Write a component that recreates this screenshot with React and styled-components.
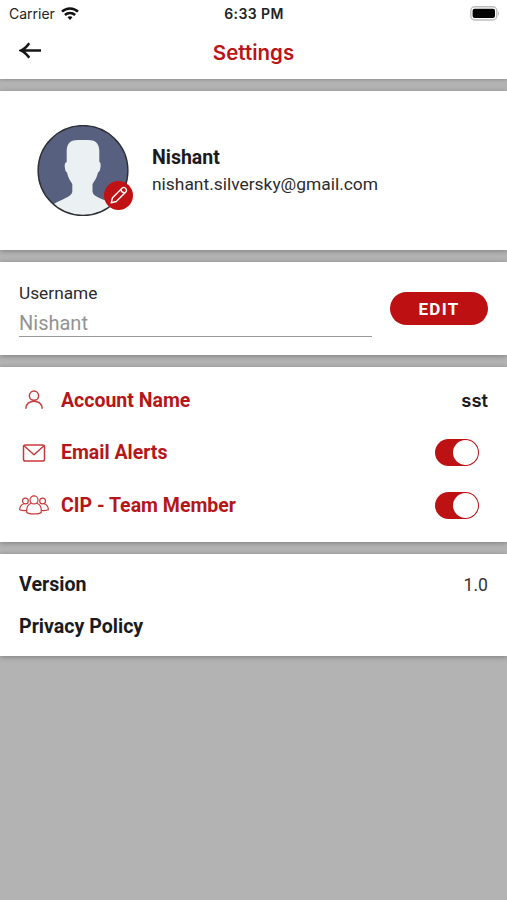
import React from 'react';
import styled, { createGlobalStyle } from 'styled-components';

const GlobalStyle = createGlobalStyle`
  * {
    box-sizing: border-box;
  }
  body {
    margin: 0;
    background: #b3b3b3;
    font-family: Roboto, sans-serif;
    color: #1b1b1d;
  }
`;

const Screen = styled.div`
  min-height: 900px;
  display: flex;
  flex-direction: column;
  gap: 12px;
  overflow: hidden;
`;

const Header = styled.header`
  height: 79px;
  background: #fff;
  box-shadow: 0 1px 3px rgba(0, 0, 0, 0.2);
`;

const StatusBar = styled.div`
  height: 27px;
  padding: 0 8px 0 9px;
  display: grid;
  grid-template-columns: 1fr auto 1fr;
  align-items: center;
  font-family: Inter, sans-serif;
  font-size: 14px;
  color: #222;
`;

const Carrier = styled.div`
  display: flex;
  align-items: center;
  gap: 6px;
`;

const Time = styled.div`
  font-size: 14px;
  font-weight: 600;
  letter-spacing: 0.4px;
`;

const Battery = styled.svg`
  justify-self: end;
`;

const NavBar = styled.div`
  height: 50px;
  padding: 0 19px;
  display: grid;
  grid-template-columns: 1fr auto 1fr;
  align-items: center;
`;

const BackButton = styled.button`
  width: 24px;
  height: 24px;
  padding: 0;
  border: 0;
  background: none;
  display: flex;
  align-items: center;
  margin-bottom: 3px;
`;

const Title = styled.h1`
  margin: 0;
  font-family: Inter, sans-serif;
  font-size: 20.5px;
  font-weight: 600;
  color: #bb1416;
`;

const Panel = styled.section`
  height: ${({ $height }) => $height}px;
  padding: ${({ $padding }) => $padding || '0 19px'};
  background: #fff;
  box-shadow: 0 1px 5px rgba(0, 0, 0, 0.3);
`;

const ProfilePanel = styled(Panel)`
  display: flex;
  align-items: center;
`;

const Avatar = styled.div`
  position: relative;
  width: 92px;
  height: 92px;
  margin-right: 23px;
`;

const EditBadge = styled.div`
  position: absolute;
  right: -4px;
  bottom: 7px;
  width: 29px;
  height: 29px;
  border-radius: 50%;
  background: #c01114;
  display: flex;
  align-items: center;
  justify-content: center;
`;

const Name = styled.div`
  font-size: 19.5px;
  line-height: 24px;
  font-weight: 700;
`;

const Email = styled.div`
  margin-top: 2px;
  font-size: 17.4px;
  line-height: 24px;
  color: #2c2c2e;
`;

const UsernamePanel = styled(Panel)`
  display: flex;
  align-items: center;
  justify-content: space-between;
`;

const Field = styled.label`
  width: 353px;
  padding-top: 1px;
  font-size: 17.3px;
  line-height: 22px;
  color: #2c2c2e;
`;

const FieldValue = styled.div`
  height: 33px;
  border-bottom: 1px solid #999;
  font-size: 20px;
  line-height: 38px;
  color: #939393;
`;

const EditButton = styled.button`
  width: 98px;
  height: 33px;
  padding: 0;
  border: 0;
  border-radius: 17px;
  background: #bc1012;
  color: #fff;
  font-family: Roboto, sans-serif;
  font-size: 17px;
  font-weight: 700;
  letter-spacing: 1.3px;
`;

const SettingRow = styled.div`
  height: 52.5px;
  display: flex;
  align-items: center;
`;

const SettingIcon = styled.svg`
  width: 30px;
  height: 26px;
  margin-right: 12px;
  fill: none;
  stroke: #c93a3c;
  stroke-width: ${({ $weight }) => $weight || 1.5};
  stroke-linecap: round;
  stroke-linejoin: round;
`;

const SettingLabel = styled.div`
  flex: 1;
  font-size: 19.5px;
  font-weight: 700;
  color: #b51618;
`;

const SettingValue = styled.div`
  font-family: Inter, sans-serif;
  font-size: 18.4px;
  font-weight: 600;
`;

const Toggle = styled.div`
  width: 44px;
  height: 27px;
  margin-right: 9px;
  padding: 1px;
  border-radius: 14px;
  background: #bd1114;
  display: flex;
  justify-content: flex-end;
`;

const Knob = styled.div`
  width: 25px;
  height: 25px;
  border-radius: 50%;
  background: #fff;
`;

const InfoRow = styled.div`
  height: 41.5px;
  display: flex;
  align-items: center;
  justify-content: space-between;
  font-size: 19.6px;
  font-weight: 700;
`;

const Version = styled.span`
  font-size: 17.6px;
  font-weight: 400;
  color: #333;
`;

function WifiIcon() {
  return (
    <svg width="18" height="14" viewBox="0 0 18 14" fill="none" stroke="#111" strokeWidth="2.5">
      <path d="M1 4.7C5.500.3 12.500.3 17 4.700" />
      <path d="M3.900 8c2.900-2.800 7.300-2.800 10.200 0" />
      <path d="M9 9.300c-1 0-1.800.3-2.500 1L9 13l2.500-2.700c-.7-.7-1.500-1-2.500-1Z" fill="#111" stroke="none" />
    </svg>
  );
}

function BatteryIcon() {
  return (
    <Battery width="29" height="15" viewBox="0 0 29 15">
      <rect x=".8" y=".8" width="26" height="13.2" rx="4" fill="#fff" stroke="#bdbdbd" strokeWidth="1.4" />
      <rect x="2.6" y="2.7" width="22.4" height="9.4" rx="2" fill="#050505" />
      <path d="M28 5.4c1.1.5 1.1 3.7 0 4.2Z" fill="#aaa" />
    </Battery>
  );
}

function AvatarPicture() {
  return (
    <svg width="92" height="92" viewBox="0 0 92 92">
      <clipPath id="avatar">
        <circle cx="46" cy="45.5" r="45" />
      </clipPath>
      <circle cx="46" cy="45.5" r="45" fill="#57617f" />
      <path
        clipPath="url(#avatar)"
        fill="#ebf1f2"
        d="M29.700 37V26C29.700 18 34 15 41 15h10c7 0 11.300 3 11.300 11v11c1.400.3 1.500 2.500 1.200 5-.3 3-1.100 5-2.500 5.500-1 4.500-3 8-5.500 11.500v7.500c.5 4.500 6 6 13 9l11 5v18H10V82l7.700-3.500c5-3.500 16.800-6.500 17.600-11.500v-8c-2.500-3.500-4.300-7-5.300-11.500-1.300-.5-1.900-2.500-2.200-5.500-.3-2.500.2-4.700 1.900-5Z"
      />
      <circle cx="46" cy="45.5" r="44.900" fill="none" stroke="#2d2f35" strokeWidth="1.4" />
    </svg>
  );
}

function PencilIcon() {
  return (
    <svg width="20" height="20" viewBox="0 0 20 20" fill="none" stroke="#fff" strokeWidth="1.4" strokeLinejoin="round">
      <path d="M2.200 17.800 3.500 12.700 13 3.200c2.300-2.300 6.100 1.500 3.800 3.800L7.300 16.500Z" />
      <path d="M11.800 4.400c.4 2.100 1.900 3.500 4 3.700" />
    </svg>
  );
}

function App() {
  return (
    <>
      <GlobalStyle />
      <Screen>
        <Header>
          <StatusBar>
            <Carrier>
              <span>Carrier</span>
              <WifiIcon />
            </Carrier>
            <Time>6:33 PM</Time>
            <BatteryIcon />
          </StatusBar>
          <NavBar>
            <BackButton aria-label="Back">
              <svg width="24" height="18" viewBox="0 0 24 18" fill="none" stroke="#171717" strokeWidth="2.4">
                <path d="M22 8.500H2.500M10.300 1.300C8.200 3.700 6 7.100 2 8.500c4 1.400 6.200 4.800 8.300 7.200" />
              </svg>
            </BackButton>
            <Title>Settings</Title>
          </NavBar>
        </Header>

        <ProfilePanel $height={159} $padding="0 37px">
          <Avatar>
            <AvatarPicture />
            <EditBadge>
              <PencilIcon />
            </EditBadge>
          </Avatar>
          <div>
            <Name>Nishant</Name>
            <Email>nishant.silversky@gmail.com</Email>
          </div>
        </ProfilePanel>

        <UsernamePanel $height={93}>
          <Field>
            Username
            <FieldValue>Nishant</FieldValue>
          </Field>
          <EditButton>EDIT</EditButton>
        </UsernamePanel>

        <Panel $height={175} $padding="7px 19px 0">
          <SettingRow>
            <SettingIcon viewBox="0 0 30 26">
              <circle cx="15" cy="8.7" r="4.6" />
              <path d="M6.900 21.300c.3-9.500 15.900-9.500 16.200 0" />
            </SettingIcon>
            <SettingLabel>Account Name</SettingLabel>
            <SettingValue>sst</SettingValue>
          </SettingRow>
          <SettingRow>
            <SettingIcon viewBox="0 0 30 26">
              <rect x="4.500" y="5" width="21" height="16" rx="1.800" />
              <path d="m5 5.800 10 9 10-9" />
            </SettingIcon>
            <SettingLabel>Email Alerts</SettingLabel>
            <Toggle>
              <Knob />
            </Toggle>
          </SettingRow>
          <SettingRow>
            <SettingIcon viewBox="0 0 30 26" $weight={1.2}>
              <circle cx="15" cy="7.900" r="4" />
              <path d="M12.300 11.300c-2.800.9-4.200 2.700-4.500 5.700l-.1 3.500c2.300 1.900 12.300 1.900 14.600 0l-.1-3.500c-.3-3-1.700-4.800-4.500-5.700" />
              <circle cx="6.400" cy="9" r="2.900" />
              <circle cx="23.600" cy="9" r="2.900" />
              <path d="M4.800 11.700c-2.600.8-4 2.700-4.200 6 2 .8 4.500 1 7 .8M25.200 11.700c2.600.8 4 2.700 4.200 6-2 .8-4.500 1-7 .8" />
            </SettingIcon>
            <SettingLabel>CIP - Team Member</SettingLabel>
            <Toggle>
              <Knob />
            </Toggle>
          </SettingRow>
        </Panel>

        <Panel $height={102} $padding="10px 19px 0">
          <InfoRow>
            Version
            <Version>1.0</Version>
          </InfoRow>
          <InfoRow>Privacy Policy</InfoRow>
        </Panel>
      </Screen>
    </>
  );
}

export default App;
